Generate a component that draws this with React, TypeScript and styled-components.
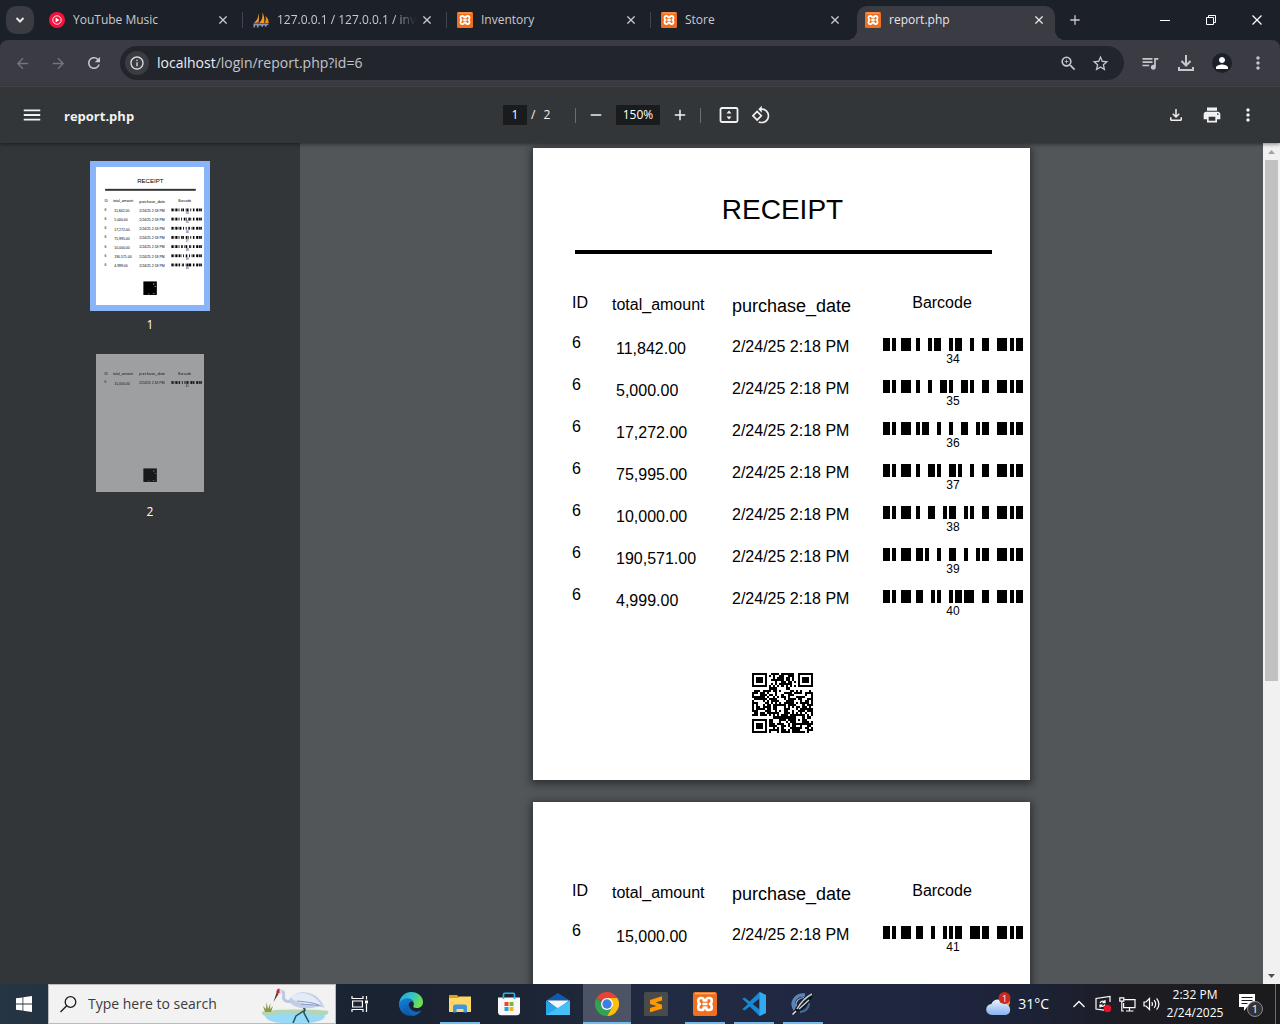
import React from 'react';
import styled, { createGlobalStyle, css } from 'styled-components';
import {
  MdAdd, MdRemove, MdMenu, MdPrint, MdMoreVert, MdOutlineFileDownload, MdStarOutline,
  MdQueueMusic, MdZoomIn, MdRotate90DegreesCcw, MdArrowBack, MdArrowForward,
  MdRefresh, MdInfoOutline, MdPerson,
} from 'react-icons/md';

const uiFont = '"Open Sans", "Noto Sans", sans-serif';
const docFont = '"Liberation Sans", Arial, sans-serif';

const GlobalStyle = createGlobalStyle`
  * { box-sizing: border-box; }
  body { margin: 0; background: #525659; font-family: ${uiFont}; }
  button { border: 0; padding: 0; background: none; color: inherit; font: inherit; cursor: pointer; }
  svg { display: block; flex: none; }
`;

const Screen = styled.div`
  display: grid;
  grid-template-rows: auto auto auto minmax(0, 1fr) auto;
  height: 100vh;
  overflow: hidden;
`;

/* ---------- tab strip ---------- */

const TabStrip = styled.div`
  display: flex;
  height: 40px;
  padding-left: 6px;
  background: #1c2028;
  color: #c9cad0;
`;

const TabSearch = styled.button`
  display: grid;
  place-items: center;
  width: 28px;
  height: 28px;
  margin: 6px 7px 0 0;
  border-radius: 10px;
  background: #3a3b43;
  color: #e6e6ea;
`;

const Tab = styled.div<{ $active?: boolean; $divider?: boolean }>`
  position: relative;
  display: flex;
  align-items: center;
  width: ${(p) => (p.$active ? 198 : 204)}px;
  height: 34px;
  margin-top: 6px;
  padding: 0 ${(p) => (p.$active ? 8 : 14)}px 6px 8px;
  ${(p) => p.$divider && css`
    &::after {
      content: '';
      position: absolute;
      right: 2px;
      top: 6px;
      width: 1px;
      height: 16px;
      background: #44464f;
    }
  `}
  ${(p) => p.$active && css`
    border-radius: 10px 10px 0 0;
    background: #3a3b43;
    color: #e6e6ea;
    &::before, &::after {
      content: '';
      position: absolute;
      bottom: 0;
      width: 10px;
      height: 10px;
    }
    &::before {
      right: 100%;
      background: radial-gradient(circle at 0 0, transparent 10px, #3a3b43 10px);
    }
    &::after {
      left: 100%;
      background: radial-gradient(circle at 100% 0, transparent 10px, #3a3b43 10px);
    }
  `}
`;

const TabLabel = styled.span<{ $fade?: boolean }>`
  flex: 1;
  margin-left: 8px;
  font-size: 12px;
  line-height: 16px;
  white-space: nowrap;
  ${(p) => p.$fade && css`mask-image: linear-gradient(90deg, #000 82%, transparent 98%);`}
`;

const TabClose = styled.button`
  display: grid;
  place-items: center;
  width: 16px;
  height: 16px;
`;

const NewTab = styled.button`
  display: grid;
  place-items: center;
  width: 28px;
  height: 28px;
  margin: 6px auto 0 6px;
`;

const WindowButton = styled.button`
  display: grid;
  place-items: center;
  width: 46px;
  height: 40px;
  color: #fff;
`;

/* ---------- address bar ---------- */

const ToolbarWrap = styled.div`
  background: #1c2028;
`;

const AddressBar = styled.div`
  display: flex;
  align-items: center;
  height: 47px;
  padding: 0 4px;
  border-bottom: 1px solid #4b4c4f;
  border-radius: 8px 8px 0 0;
  background: #3a3b43;
  color: #c7c8ce;
`;

const NavButton = styled.button<{ $off?: boolean }>`
  display: grid;
  place-items: center;
  width: 36px;
  height: 34px;
  color: ${(p) => (p.$off ? '#74757c' : '#c7c8ce')};
`;

const Omnibox = styled.div`
  display: flex;
  flex: 1;
  align-items: center;
  height: 34px;
  margin: 0 8px;
  padding: 0 8px 0 5px;
  border-radius: 17px;
  background: #23252d;
`;

const SiteInfo = styled.button`
  display: grid;
  place-items: center;
  width: 24px;
  height: 24px;
  border-radius: 50%;
  background: #3a3b43;
  color: #dcdde2;
`;

const Url = styled.a`
  flex: 1;
  margin-left: 8px;
  color: #c3c5cc;
  font-size: 14px;
  line-height: 20px;
  text-decoration: none;
`;

const Host = styled.span`
  color: #eceef2;
`;

const OmniButton = styled.button`
  display: grid;
  place-items: center;
  width: 32px;
  height: 32px;
`;

const Avatar = styled.span`
  display: grid;
  place-items: center;
  width: 20px;
  height: 20px;
  border-radius: 50%;
  background: #1c2028;
  color: #fff;
`;

/* ---------- PDF toolbar ---------- */

const PdfBar = styled.header`
  position: relative;
  z-index: 1;
  display: grid;
  grid-template-columns: 1fr auto 1fr;
  align-items: center;
  height: 56px;
  padding: 0 16px;
  background: #323639;
  box-shadow: 0 1px 4px rgba(0, 0, 0, 0.5);
  color: #f1f1f1;
`;

const PdfGroup = styled.div<{ $end?: boolean }>`
  display: flex;
  align-items: center;
  justify-content: ${(p) => (p.$end ? 'flex-end' : 'flex-start')};
  gap: ${(p) => (p.$end ? 4 : 0)}px;
`;

const PdfButton = styled.button`
  display: grid;
  place-items: center;
  width: 32px;
  height: 32px;
`;

const FileName = styled.h1`
  margin: 0 0 0 16px;
  padding-top: 2px;
  font-size: 13px;
  font-weight: 700;
  line-height: 20px;
`;

const PdfInput = styled.input<{ $wide?: boolean }>`
  width: ${(p) => (p.$wide ? 44 : 24)}px;
  height: 20px;
  margin: 0 4px 0 ${(p) => (p.$wide ? 4 : 0)}px;
  padding: 0;
  border: 0;
  background: #191b1c;
  color: #fff;
  font: 12px/20px ${uiFont};
  text-align: center;
`;

const PageTotal = styled.span`
  display: flex;
  gap: 8px;
  width: 44px;
  font-size: 12px;
  line-height: 20px;
`;

const BarDivider = styled.span<{ $tail?: boolean }>`
  width: 1px;
  height: 15px;
  margin: ${(p) => (p.$tail ? '0 12px 0 4px' : '0 4px 0 0')};
  background: #6b6e70;
`;

/* ---------- sidebar & viewer ---------- */

const Workspace = styled.main`
  display: grid;
  grid-template-columns: 300px minmax(0, 1fr) 17px;
  min-height: 0;
`;

const Sidebar = styled.nav`
  display: flex;
  flex-direction: column;
  align-items: center;
  gap: 13px;
  padding-top: 18px;
  background: #323639;
  color: #fff;
`;

const Thumb = styled.button<{ $current?: boolean }>`
  display: flex;
  flex-direction: column;
  align-items: center;
  gap: 4px;
  font-size: 12px;
  line-height: 20px;
  & > svg {
    border: 6px solid ${(p) => (p.$current ? '#8ab4f8' : 'transparent')};
    box-sizing: content-box;
    opacity: ${(p) => (p.$current ? 1 : 0.52)};
  }
`;

const Viewer = styled.section`
  display: flex;
  flex-direction: column;
  align-items: center;
  gap: 22px;
  padding-top: 5px;
  overflow: hidden;
  background: #525659;
`;

const Sheet = styled.article<{ $continued?: boolean }>`
  flex: none;
  width: 497px;
  min-height: 632px;
  padding-top: ${(p) => (p.$continued ? 75 : 44)}px;
  background: #fff;
  box-shadow: 0 2px 8px 2px rgba(0, 0, 0, 0.45);
  color: #000;
  font: 16px/20px ${docFont};
`;

const ReceiptTitle = styled.h2`
  margin: 0;
  padding-left: 2px;
  font-size: 28px;
  font-weight: 400;
  line-height: 36px;
  text-align: center;
`;

const Rule = styled.hr`
  height: 4px;
  margin: 22px 38px 35px 42px;
  border: 0;
  background: #000;
`;

const Lines = styled.table`
  width: 452px;
  margin: 0 0 48px 39px;
  border-collapse: collapse;
  table-layout: fixed;
  th, td { height: 42px; padding: 0; font-weight: 400; text-align: left; vertical-align: top; white-space: nowrap; }
`;

const Col = styled.col<{ $w: number }>`
  width: ${(p) => p.$w}px;
`;

const Head = styled.th<{ $drop: number; $large?: boolean }>`
  && {
    padding-top: ${(p) => p.$drop}px;
    font-size: ${(p) => (p.$large ? 18 : 16)}px;
  }
`;

const Cell = styled.td<{ $drop: number; $indent?: boolean }>`
  && {
    padding: ${(p) => p.$drop}px 0 0 ${(p) => (p.$indent ? 4 : 0)}px;
  }
`;

const BarcodeHeading = styled.span`
  display: block;
  width: 118px;
  text-align: center;
`;

const BarcodeBox = styled.div`
  width: 140px;
  font-size: 12px;
  line-height: 16px;
  text-align: center;
`;

const QrBox = styled.div`
  display: grid;
  justify-content: center;
  padding-left: 2px;
`;

const ScrollTrack = styled.div`
  display: grid;
  grid-template-rows: 17px 1fr 17px;
  justify-items: center;
  background: #f1f1f1;
`;

const ScrollArrow = styled.button`
  display: grid;
  place-items: center;
  width: 17px;
`;

const ScrollThumb = styled.div`
  width: 13px;
  height: 64.5%;
  background: #c1c1c1;
`;

/* ---------- taskbar ---------- */

const Taskbar = styled.footer`
  display: flex;
  height: 40px;
  background: linear-gradient(90deg, #263543 0, #1a2332 28%, #1c2433 40%, #212b42 52%, #1f2640 70%, #1c2338 80%, #1c1c23 88%, #1b1b1d 100%);
  color: #fff;
`;

const TaskButton = styled.button<{ $state?: 'open' | 'active' }>`
  position: relative;
  display: grid;
  place-items: center;
  width: 48px;
  height: 40px;
  margin-right: 1px;
  background: ${(p) => (p.$state === 'active' ? '#4b5364' : 'transparent')};
  ${(p) => p.$state && css`
    &::after {
      content: '';
      position: absolute;
      bottom: 0;
      left: ${p.$state === 'active' ? 0 : 4}px;
      right: ${p.$state === 'active' ? 0 : 4}px;
      height: 2px;
      background: #76b9ed;
    }
  `}
`;

const StartButton = styled(TaskButton)`
  margin-right: 0;
`;

const SearchBox = styled.label`
  display: flex;
  align-items: center;
  width: 288px;
  padding: 0 4px 0 11px;
  border: 1px solid #b8babc;
  background: #f2f2f2;
  color: #1b1b1b;
`;

const SearchInput = styled.input`
  flex: 1;
  min-width: 0;
  margin-left: 11px;
  padding: 0;
  border: 0;
  background: none;
  outline: 0;
  font: 14px/20px ${uiFont};
  &::placeholder { color: #3b3b3b; opacity: 1; }
`;

const Apps = styled.div`
  display: flex;
  margin-left: 2px;
`;

const Tray = styled.div`
  display: flex;
  align-items: center;
  margin-left: auto;
`;

const Weather = styled.button`
  display: flex;
  align-items: center;
  gap: 6px;
  margin-right: 18px;
  font-size: 14px;
  line-height: 20px;
`;

const TrayButton = styled.button`
  display: grid;
  place-items: center;
  width: 24px;
  height: 40px;
`;

const Clock = styled.button`
  width: 64px;
  font-size: 12px;
  line-height: 18px;
  text-align: center;
  white-space: nowrap;
`;

const Notifications = styled.button`
  display: grid;
  place-items: center;
  width: 48px;
  height: 40px;
`;

const ShowDesktop = styled.button`
  width: 5px;
  height: 40px;
  border-left: 1px solid #6a6a6c;
`;

/* ---------- data ---------- */

type Line = { amount: string; code: number };

const firstPage: Line[] = [
  { amount: '11,842.00', code: 34 },
  { amount: '5,000.00', code: 35 },
  { amount: '17,272.00', code: 36 },
  { amount: '75,995.00', code: 37 },
  { amount: '10,000.00', code: 38 },
  { amount: '190,571.00', code: 39 },
  { amount: '4,999.00', code: 40 },
];
const secondPage: Line[] = [{ amount: '15,000.00', code: 41 }];
const purchaseDate = '2/24/25 2:18 PM';

/* Code 128 set C symbols, bar/space widths in modules */
const symbols: Record<number, string> = {
  34: '131123', 35: '131321', 36: '112313', 37: '132113', 38: '132311',
  39: '211313', 40: '231113', 41: '231311', 42: '112133', 43: '112331',
};

function barsFor(code: number) {
  const widths = '211232' + symbols[code] + symbols[code + 2] + '2331112';
  const bars: { x: number; w: number }[] = [];
  let m = 0;
  widths.split('').forEach((d, i) => {
    const n = Number(d);
    if (i % 2 === 0) bars.push({ x: m * 3 + (m > 40 ? 1 : 0), w: n * 3 + 1 });
    m += n;
  });
  return bars;
}

function BarcodeBars({ code, x = 0, y = 0 }: { code: number; x?: number; y?: number }) {
  return <>{barsFor(code).map((b) => <rect key={b.x} x={x + b.x} y={y} width={b.w} height="13" />)}</>;
}

const QR = 29;
function qrDark(r: number, c: number): boolean {
  const finder = (y: number, x: number) => {
    if (y < -1 || y > 7 || x < -1 || x > 7) return null;
    const d = Math.max(Math.abs(y - 3), Math.abs(x - 3));
    return d !== 2 && d !== 4;
  };
  for (const [a, b] of [[r, c], [r, c - 22], [r - 22, c]]) {
    const f = finder(a, b);
    if (f !== null) return f;
  }
  const d = Math.max(Math.abs(r - 22), Math.abs(c - 22));
  if (d <= 2) return d !== 1;
  if (r === 6) return c % 2 === 0;
  if (c === 6) return r % 2 === 0;
  const v = Math.sin(r * 12.9898 + c * 78.233) * 43758.5453;
  return v - Math.floor(v) > 0.43;
}

function QrCode() {
  let d = '';
  for (let r = 0; r < QR; r++) {
    for (let c = 0; c < QR; c++) if (qrDark(r, c)) d += `M${c} ${r}h1v1h-1z`;
  }
  return (
    <svg width="61" height="60" viewBox="0 0 29 29" preserveAspectRatio="none" shapeRendering="crispEdges" role="img" aria-label="QR code">
      <path d={d} />
    </svg>
  );
}

/* ---------- icons ---------- */

const Cross = ({ size = 8, weight = 1.6 }: { size?: number; weight?: number }) => (
  <svg width={size} height={size} viewBox="0 0 10 10" stroke="currentColor" strokeWidth={weight}><path d="M.5.5l9 9M9.5.5l-9 9" /></svg>
);

const YouTubeMusicIcon = () => (
  <svg width="16" height="16" viewBox="0 0 16 16"><circle cx="8" cy="8" r="8" fill="#f5123d" /><circle cx="8" cy="8" r="4.2" fill="none" stroke="#fff" strokeWidth=".9" /><path d="M6.6 5.6v4.8L10.4 8z" fill="#fff" /></svg>
);

const PhpMyAdminIcon = () => (
  <svg width="16" height="16" viewBox="0 0 16 16">
    <path d="M5.2 1C5.5 5 4.4 8.3.8 11l4.8-.4C6.2 7 6.1 3.600 5.2 1z" fill="#e8993a" />
    <path d="M9.2.3C10 4 9.4 8 6.3 11h5C11.600 7 11 3 9.2.3z" fill="#f59a1b" />
    <path d="M12.7 4c.2 2.600 0 5-.8 7h3.900C15.600 8.300 14.600 5.700 12.700 4z" fill="#f08a12" />
    <path d="M.5 11.500h15v1.300l-2 .6v1.400h-1.500v-1.300H10v1.200H8.300v-1.200H5.500v2H4v-2H2v2H.5z" fill="#8e8fc1" />
  </svg>
);

const XamppIcon = ({ size = 16 }: { size?: number }) => (
  <svg width={size} height={size} viewBox="0 0 24 24" fill="none">
    <rect width="24" height="24" rx="2" fill="#ef6f1e" />
    <path d="M2 1.500h20" stroke="#f9b184" strokeWidth="1.400" />
    <path
      d="M10.800 9.500V8.300C10.800 6.900 9.900 6 8.500 6H7.800C6.400 6 5.300 7 5.300 8.500v1c0 1.200.6 2 1.700 2.500-1.100.5-1.700 1.300-1.700 2.500v1c0 1.500 1.100 2.500 2.500 2.500h.7c1.400 0 2.300-.9 2.300-2.300v-1.200M13.200 9.500V8.300c0-1.400.9-2.300 2.300-2.300h.7c1.400 0 2.500 1 2.500 2.500v1c0 1.200-.6 2-1.700 2.500 1.100.5 1.700 1.300 1.700 2.500v1c0 1.500-1.100 2.500-2.500 2.500h-.7c-1.400 0-2.300-.9-2.300-2.300v-1.200M9.500 12h5M10.800 8.500h2.400M10.800 15.500h2.400"
      stroke="#fff"
      strokeWidth="2.700"
      strokeLinejoin="round"
    />
  </svg>
);

const DownloadTray = () => (
  <svg width="18" height="18" viewBox="0 0 18 18" fill="none" stroke="currentColor" strokeWidth="2"><path d="M9 1v10M4.500 7L9 11.500 13.500 7M2 13v3h14v-3" /></svg>
);

const FitPage = () => (
  <svg width="20" height="20" viewBox="0 0 20 20"><rect x="1.500" y="3" width="17" height="14" rx="1.500" fill="none" stroke="currentColor" strokeWidth="1.800" /><path d="M10 5.500L7.500 8.500h5zM10 14.500l-2.500-3h5z" fill="currentColor" /></svg>
);

const WindowsLogo = () => (
  <svg width="16" height="16" viewBox="0 0 16 16" fill="#fff"><path d="M0 2.300L6.500 1.400v6.200H0zM7.300 1.300L16 0v7.600H7.300zM0 8.400h6.500v6.200L0 13.700zM7.300 8.400H16V16l-8.700-1.300z" /></svg>
);

const Crane = () => (
  <svg width="70" height="38" viewBox="0 0 70 38">
    <path d="M1 27c8-3 52-3 66-1 2 3-4 5-8 6H8c-5-1-8-3-7-5z" fill="#b3d6b8" />
    <path d="M4 31c14-3 44-3 60 0 0 4-10 7-20 7H22C12 38 5 35 4 31z" fill="#97daf7" />
    <path d="M4 27l-2-6 3 3 .5-7 1.500 7L9.500 18 9 24l3-3-2 6z" fill="#8a9a45" />
    <path d="M42 22l2 3-9 6-3 7M44 22l-1 6 5 9.500" fill="none" stroke="#24525c" strokeWidth="1.500" />
    <path d="M28 15c3-7 12-9 20-7 8 2 13 8 15.500 15-4-2-6-2-8-1-7 2-18 2-24-2-2-1.500-3.500-3-3.500-5z" fill="#c3cde6" />
    <path d="M29 12c7-6 18-5 25 1 3 2 5 5 7 8-10-1-24-1-32-9z" fill="#e4ebf7" />
    <path d="M36 16c8 1 16 1 24 5M40 19c6 1 12 0 18 2" fill="none" stroke="#7f93c4" strokeWidth=".9" />
    <path d="M19 6.500c4-1 4 2 3.500 5s2 6 8 4.500" fill="none" stroke="#bcc7e2" strokeWidth="3" />
    <circle cx="18.500" cy="6.500" r="2.800" fill="#d3dbec" />
    <path d="M18.500 3.600c-3 .4-3.500 3-2.700 5l2.700-.6z" fill="#cf222a" />
    <path d="M15.600 7.500L12.500 17l5-8z" fill="#4e3b36" />
  </svg>
);

const TaskView = () => (
  <svg width="18" height="16" viewBox="0 0 18 16" fill="none" stroke="#fff" strokeWidth="1.200"><path d="M1 0v2.500h11V0M1 16v-2.500h11V16M1.600 5h9.800v6H1.600zM15.500 0v3.500M15.500 8v8" /><path d="M14 4.500h3v3h-3z" fill="#fff" stroke="none" /></svg>
);

const EdgeIcon = () => (
  <svg width="24" height="24" viewBox="0 0 24 24">
    <defs>
      <linearGradient id="edgeTop" x1="0" y1="0" x2="1" y2=".4"><stop stopColor="#1f9ee0" /><stop offset=".55" stopColor="#35c5c4" /><stop offset="1" stopColor="#6de04f" /></linearGradient>
      <linearGradient id="edgeLow" x1="0" y1="0" x2=".6" y2="1"><stop stopColor="#1585da" /><stop offset="1" stopColor="#0d4d9c" /></linearGradient>
    </defs>
    <path d="M.2 11C1 4.500 6 0 12.200 0 19 0 24 4.600 24 10c0 4-3 6-6.300 6-2.600 0-4-1-3.200-2.300C16 11 13.500 8 9.800 8 5 8 1.500 10 .2 15z" fill="url(#edgeTop)" />
    <path d="M.1 12C1 8.300 5 6 9 6.200c3.400.2 5.200 2 5.500 3.800-1.500-1.200-3.500-.6-4.500 1.500-1.500 3.500 1 8 6 8.700 2.500.3 4.500-.6 6.300-1.700C20.300 22 16.500 24 12.200 24 5 24-.3 18.500.1 12z" fill="url(#edgeLow)" />
    <path d="M9.800 11.500c-3 3.500-1.500 9.500 3.700 12 4 .2 7-2 8.800-5-7 3.500-12.500-1-12.500-7z" fill="#1166bb" />
  </svg>
);

const ExplorerIcon = () => (
  <svg width="24" height="20" viewBox="0 0 24 20"><path d="M1 1h8l2 2h11v4H1z" fill="#dfa018" /><path d="M1 4h9l1.500-1.500H23V18H1z" fill="#ffd766" /><path d="M5 18.500v-6.500l1.500-1.500h11L19 12v6.500h-3.500V15h-7v3.500z" fill="#3f96dc" /></svg>
);

const StoreIcon = () => (
  <svg width="24" height="24" viewBox="0 0 24 24"><path d="M1 5.500h22V20c0 2-1 3.200-3 3.200H4c-2 0-3-1.200-3-3.200z" fill="#f8f8f8" /><path d="M6.500 7V2.500c0-.8.4-1.200 1.200-1.200h8.600c.8 0 1.200.4 1.200 1.200V7" fill="none" stroke="#29b6ea" strokeWidth="1.600" /><path d="M7.500 10h4v4h-4z" fill="#e94b23" /><path d="M12.500 10h4v4h-4z" fill="#7eb82d" /><path d="M7.500 15h4v4h-4z" fill="#2a9fe0" /><path d="M12.500 15h4v4h-4z" fill="#f7b41b" /></svg>
);

const MailIcon = () => (
  <svg width="24" height="24" viewBox="0 0 24 24"><path d="M0 8.500L12 1l12 7.500L12 14z" fill="#1259a8" /><path d="M1 8.500h22L12 17z" fill="#f3f6f9" /><path d="M0 8.500l12 8 12-8V23H0z" fill="#26a6ea" /><path d="M0 23L24 8.500V23z" fill="#45c0f5" /></svg>
);

const ChromeIcon = () => (
  <svg width="24" height="24" viewBox="0 0 24 24"><path d="M12 12L1.600 6A12 12 0 0 1 22.400 6z" fill="#e94235" /><path d="M12 12V6h10.400A12 12 0 0 1 12 24l5.200-9z" fill="#fbbf12" /><path d="M12 12l5.200 3L12 24A12 12 0 0 1 1.600 6l5.200 9z" fill="#32a350" /><path d="M1.600 6H12v6z" fill="#e94235" /><path d="M1.600 6l5.200 9 2-3z" fill="#32a350" /><circle cx="12" cy="12" r="6" fill="#fff" /><circle cx="12" cy="12" r="4.700" fill="#3f7ee8" /></svg>
);

const SublimeIcon = () => (
  <svg width="24" height="24" viewBox="0 0 24 24"><rect width="24" height="24" rx="1.500" fill="#4a4a4a" /><path d="M6 8l12-3.800v4.300l-6.500 2.100L18 12.700v4L6 20.300V16l6.500-2L6 12z" fill="#ff9800" /></svg>
);

const CodeIcon = () => (
  <svg width="24" height="24" viewBox="0 0 24 24"><path d="M17.500 0L24 3v18l-6.500 3L7.700 14.500 2.500 18.500.3 17.300 6 12 .3 6.700l2.200-1.200 5.200 4z" fill="#1788d4" /><path d="M17.500 6.500L10.600 12l6.900 5.500z" fill="#20283d" /><path d="M17.500 0L24 3v18l-6.500 3z" fill="#31a8f0" /></svg>
);

const QuillIcon = () => (
  <svg width="24" height="24" viewBox="0 0 24 24" fill="none">
    <path d="M4 18C-1 10 5 2 14 3" stroke="#5b84b5" strokeWidth="3.500" />
    <path d="M5 15C4 9 8 6 13 5.500" stroke="#8fadd0" strokeWidth="1.200" />
    <path d="M18 11c0 5-4 9-9 9" stroke="#426894" strokeWidth="2.500" />
    <path d="M1.500 22.500C4 15 12 4 22 1c0 7-9 17-17 19z" fill="#11151c" />
    <path d="M6 17C10 10 15 5 21 2M8 17l10-9" stroke="#c5ccd6" strokeWidth="1.500" />
    <path d="M1.500 22.500L5 19" stroke="#e8ebef" strokeWidth="1.500" />
  </svg>
);

const CloudIcon = () => (
  <svg width="26" height="24" viewBox="0 0 26 24"><defs><linearGradient id="cloud" x1="0" y1="0" x2="0" y2="1"><stop stopColor="#e9f2ff" /><stop offset="1" stopColor="#85b1f0" /></linearGradient></defs><circle cx="19" cy="10" r="5" fill="#f49a25" /><path d="M6 23a5.500 5.500 0 0 1-.6-11A7 7 0 0 1 18.500 12a5.600 5.600 0 0 1 1.500 11z" fill="url(#cloud)" /><circle cx="18.500" cy="6" r="6" fill="#c8291e" /><text x="18.500" y="9.500" fill="#fff" fontSize="9" textAnchor="middle" fontFamily="Open Sans, sans-serif">1</text></svg>
);

const UpdateIcon = () => (
  <svg width="18" height="18" viewBox="0 0 18 18" fill="none" stroke="#fff" strokeWidth="1.200"><path d="M16 7V1.500L2 3.500v10.500l8 1.200M6 8c1-2.500 4-2.500 5-.5M11 5v2.700H8.500M11 9.500c-1 2.200-3.500 2.400-4.700.8M6 12.500V10h2.500" /><circle cx="13.500" cy="13.500" r="3.700" fill="#ea1326" stroke="none" /></svg>
);

const NetworkIcon = () => (
  <svg width="17" height="15" viewBox="0 0 17 15" fill="none" stroke="#fff" strokeWidth="1.200"><path d="M5.500 2.600H16v8H4.600V6M10.500 11v3M7 14h7.500M.8.800h4v3.400h-4zM2.800 4.200V14h2" /></svg>
);

const SoundIcon = () => (
  <svg width="17" height="14" viewBox="0 0 17 14" fill="none" stroke="#fff" strokeWidth="1.200"><path d="M1 5h2l3.500-3.500v11L3 9H1zM8.800 5c.8 1.300.8 2.700 0 4M11.200 3.200c1.800 2.300 1.800 5.300 0 7.600M13.600 1.300c2.800 3.500 2.800 8 0 11.400" /></svg>
);

const NotificationIcon = () => (
  <svg width="26" height="26" viewBox="0 0 26 26"><path d="M1 3h16v13H9l-3 4v-4H1z" fill="#fff" /><path d="M3.500 6.500h11M3.500 9.500h11M3.500 12.500h6" stroke="#1b1b1d" strokeWidth="1.200" /><circle cx="17" cy="18" r="7.500" fill="#333335" stroke="#8b8b8d" /><text x="17" y="22" fill="#fff" fontSize="11" textAnchor="middle" fontFamily="Open Sans, sans-serif">1</text></svg>
);

/* ---------- document ---------- */

function LinesTable({ lines }: { lines: Line[] }) {
  return (
    <Lines>
      <colgroup><Col $w={40} /><Col $w={120} /><Col $w={151} /><Col $w={141} /></colgroup>
      <thead>
        <tr>
          <Head $drop={4}>ID</Head>
          <Head $drop={6}>total_amount</Head>
          <Head $drop={7} $large>purchase_date</Head>
          <Head $drop={4}><BarcodeHeading>Barcode</BarcodeHeading></Head>
        </tr>
      </thead>
      <tbody>
        {lines.map((l) => (
          <tr key={l.code}>
            <Cell $drop={2}>6</Cell>
            <Cell $drop={8} $indent>{l.amount}</Cell>
            <Cell $drop={6}>{purchaseDate}</Cell>
            <Cell $drop={7}>
              <BarcodeBox>
                <svg width="141" height="13" shapeRendering="crispEdges"><BarcodeBars code={l.code} /></svg>
                {l.code}
              </BarcodeBox>
            </Cell>
          </tr>
        ))}
      </tbody>
    </Lines>
  );
}

function Miniature({ lines, continued }: { lines: Line[]; continued?: boolean }) {
  const top = continued ? 94 : 160;
  return (
    <svg width="108" height="138" viewBox="0 0 497 632" preserveAspectRatio="none" fontFamily="Liberation Sans, Arial, sans-serif" fontSize="16">
      <rect width="497" height="632" fill="#fff" />
      {!continued && <text x="250" y="72" fontSize="28" textAnchor="middle">RECEIPT</text>}
      {!continued && <rect x="42" y="100" width="417" height="9" fill="#333" />}
      <text x="39" y={top}>ID</text>
      <text x="79" y={top + 2}>total_amount</text>
      <text x="199" y={top + 4} fontSize="18">purchase_date</text>
      <text x="379" y={top}>Barcode</text>
      {lines.map((l, i) => {
        const y = top + 41 + i * 42;
        return (
          <g key={l.code}>
            <text x="39" y={y}>6</text>
            <text x="84" y={y + 6}>{l.amount}</text>
            <text x="199" y={y + 4}>{purchaseDate}</text>
            <BarcodeBars code={l.code} x={347} y={y - 11} />
            <text x="413" y={y + 15} fontSize="12">{l.code}</text>
          </g>
        );
      })}
      <rect x="218" y="524" width="62" height="62" />
      <path d="M264 532h4v8h-4zM270 545h5v4h-5zM240 579h5v4h-5zM262 578h7v4h-7z" fill="#aaa" />
    </svg>
  );
}

const tabs = [
  { title: 'YouTube Music', icon: <YouTubeMusicIcon />, divider: true },
  { title: '127.0.0.1 / 127.0.0.1 / inv', icon: <PhpMyAdminIcon />, divider: true, fade: true },
  { title: 'Inventory', icon: <XamppIcon />, divider: true },
  { title: 'Store', icon: <XamppIcon /> },
  { title: 'report.php', icon: <XamppIcon />, active: true },
];

const apps: { name: string; icon: React.ReactNode; state?: 'open' | 'active' }[] = [
  { name: 'Edge', icon: <EdgeIcon /> },
  { name: 'File Explorer', icon: <ExplorerIcon />, state: 'open' },
  { name: 'Store', icon: <StoreIcon /> },
  { name: 'Mail', icon: <MailIcon /> },
  { name: 'Chrome', icon: <ChromeIcon />, state: 'active' },
  { name: 'Sublime Text', icon: <SublimeIcon /> },
  { name: 'XAMPP', icon: <XamppIcon size={24} />, state: 'open' },
  { name: 'Visual Studio Code', icon: <CodeIcon />, state: 'open' },
  { name: 'Report designer', icon: <QuillIcon />, state: 'open' },
];

export default function App() {
  return (
    <Screen>
      <GlobalStyle />
      <TabStrip>
        <TabSearch aria-label="Search tabs">
          <svg width="10" height="8" viewBox="0 0 10 8" fill="none" stroke="currentColor" strokeWidth="2"><path d="M1.500 2L5 5.500 8.500 2" /></svg>
        </TabSearch>
        {tabs.map((t) => (
          <Tab key={t.title} $active={t.active} $divider={t.divider}>
            {t.icon}
            <TabLabel $fade={t.fade}>{t.title}</TabLabel>
            <TabClose aria-label={`Close ${t.title}`}><Cross /></TabClose>
          </Tab>
        ))}
        <NewTab aria-label="New tab"><MdAdd size={16} /></NewTab>
        <WindowButton aria-label="Minimize"><svg width="10" height="10"><path d="M0 5h10v1H0z" fill="currentColor" /></svg></WindowButton>
        <WindowButton aria-label="Restore"><svg width="10" height="10" fill="none" stroke="currentColor"><path d="M.5 2.500h7v7h-7zM2.500 2.500v-2h7v7h-2" /></svg></WindowButton>
        <WindowButton aria-label="Close window"><Cross size={10} weight={1.2} /></WindowButton>
      </TabStrip>

      <ToolbarWrap>
        <AddressBar>
          <NavButton $off aria-label="Back"><MdArrowBack size={17} /></NavButton>
          <NavButton $off aria-label="Forward"><MdArrowForward size={17} /></NavButton>
          <NavButton aria-label="Reload"><MdRefresh size={18} /></NavButton>
          <Omnibox>
            <SiteInfo aria-label="Site information"><MdInfoOutline size={16} /></SiteInfo>
            <Url href="#report"><Host>localhost</Host>/login/report.php?id=6</Url>
            <OmniButton aria-label="Zoom"><MdZoomIn size={19} /></OmniButton>
            <OmniButton aria-label="Bookmark"><MdStarOutline size={19} /></OmniButton>
          </Omnibox>
          <NavButton aria-label="Media"><MdQueueMusic size={20} /></NavButton>
          <NavButton aria-label="Downloads"><DownloadTray /></NavButton>
          <NavButton aria-label="Profile"><Avatar><MdPerson size={18} /></Avatar></NavButton>
          <NavButton aria-label="Menu"><MdMoreVert size={20} /></NavButton>
        </AddressBar>
      </ToolbarWrap>

      <PdfBar>
        <PdfGroup>
          <PdfButton aria-label="Toggle sidebar"><MdMenu size={22} /></PdfButton>
          <FileName>report.php</FileName>
        </PdfGroup>
        <PdfGroup>
          <PdfInput aria-label="Page number" defaultValue="1" />
          <PageTotal><span>/</span><span>2</span></PageTotal>
          <BarDivider />
          <PdfButton aria-label="Zoom out"><MdRemove size={18} /></PdfButton>
          <PdfInput $wide aria-label="Zoom level" defaultValue="150%" />
          <PdfButton aria-label="Zoom in"><MdAdd size={18} /></PdfButton>
          <BarDivider $tail />
          <PdfButton aria-label="Fit to page"><FitPage /></PdfButton>
          <PdfButton aria-label="Rotate"><MdRotate90DegreesCcw size={20} /></PdfButton>
        </PdfGroup>
        <PdfGroup $end>
          <PdfButton aria-label="Download"><MdOutlineFileDownload size={18} /></PdfButton>
          <PdfButton aria-label="Print"><MdPrint size={20} /></PdfButton>
          <PdfButton aria-label="More actions"><MdMoreVert size={20} /></PdfButton>
        </PdfGroup>
      </PdfBar>

      <Workspace>
        <Sidebar>
          <Thumb $current><Miniature lines={firstPage} />1</Thumb>
          <Thumb><Miniature lines={secondPage} continued />2</Thumb>
        </Sidebar>
        <Viewer>
          <Sheet>
            <ReceiptTitle>RECEIPT</ReceiptTitle>
            <Rule />
            <LinesTable lines={firstPage} />
            <QrBox><QrCode /></QrBox>
          </Sheet>
          <Sheet $continued>
            <LinesTable lines={secondPage} />
          </Sheet>
        </Viewer>
        <ScrollTrack>
          <ScrollArrow aria-label="Scroll up"><svg width="7" height="4"><path d="M0 4L3.500 0 7 4z" fill="#a3a3a3" /></svg></ScrollArrow>
          <ScrollThumb />
          <ScrollArrow aria-label="Scroll down"><svg width="7" height="4"><path d="M0 0l3.500 4L7 0z" fill="#505050" /></svg></ScrollArrow>
        </ScrollTrack>
      </Workspace>

      <Taskbar>
        <StartButton aria-label="Start"><WindowsLogo /></StartButton>
        <SearchBox>
          <svg width="17" height="17" viewBox="0 0 17 17" fill="none" stroke="currentColor" strokeWidth="1.300"><circle cx="10.500" cy="6" r="5.300" /><path d="M6.700 9.800L.5 16" /></svg>
          <SearchInput aria-label="Search" placeholder="Type here to search" />
          <Crane />
        </SearchBox>
        <TaskButton aria-label="Task view"><TaskView /></TaskButton>
        <Apps>
          {apps.map((a) => <TaskButton key={a.name} aria-label={a.name} $state={a.state}>{a.icon}</TaskButton>)}
        </Apps>
        <Tray>
          <Weather><CloudIcon />31°C</Weather>
          <TrayButton aria-label="Hidden icons"><svg width="12" height="8" fill="none" stroke="#fff" strokeWidth="1.300"><path d="M.5 7L6 1.500 11.500 7" /></svg></TrayButton>
          <TrayButton aria-label="Updates"><UpdateIcon /></TrayButton>
          <TrayButton aria-label="Network"><NetworkIcon /></TrayButton>
          <TrayButton aria-label="Volume"><SoundIcon /></TrayButton>
          <Clock>2:32 PM<br />2/24/2025</Clock>
          <Notifications aria-label="Notifications"><NotificationIcon /></Notifications>
          <ShowDesktop aria-label="Show desktop" />
        </Tray>
      </Taskbar>
    </Screen>
  );
}
